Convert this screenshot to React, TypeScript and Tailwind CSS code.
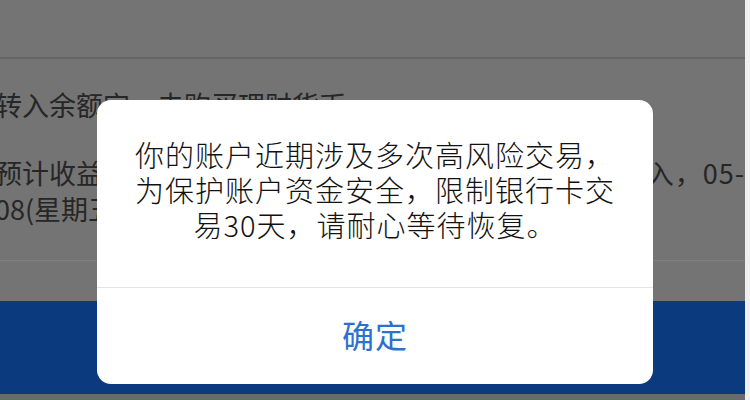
const cjk = "font-['Noto_Sans_CJK_SC','Noto_Sans',sans-serif]";

function AlertDialog() {
  return (
    <div className="absolute left-[97px] top-[100px] w-[556px] h-[284px] bg-white rounded-[14px] flex flex-col overflow-hidden">
      <div className="flex-1 flex items-start justify-center pt-[37px] border-b border-[#e4e4e4]">
        <p className="text-center text-[29px] leading-[35px] text-[#111111] font-light tracking-[1px]">
          你的账户近期涉及多次高风险交易，
          <br />
          为保护账户资金安全，限制银行卡交
          <br />
          易30天，请耐心等待恢复。
        </p>
      </div>
      <button className="h-[96px] w-full flex items-center justify-center pb-[4px] text-[32px] text-[#2f6fcf] tracking-[1px]">
        确定
      </button>
    </div>
  );
}

export default function App() {
  return (
    <div className={`relative w-[750px] h-[400px] overflow-hidden flex bg-[#747474] ${cjk}`}>
      <div className="w-[745px] flex flex-col">
        {/* header area */}
        <div className="h-[59px] border-b-2 border-[#656565]" />

        {/* detail rows */}
        <div className="h-[202px] border-b border-[#7e7e7e] flex flex-col text-[27px] leading-[36px] text-[#262626] whitespace-nowrap overflow-hidden">
          <div className="pt-[28px] -ml-[5px]">转入余额宝，去购买理财货币</div>
          <div className="mt-[32px] -ml-[5px] flex justify-between">
            <span>预计收益将于</span>
            <span className="tracking-[1px]">入，05-</span>
          </div>
          <div className="-ml-[5px]">08(星期五)</div>
        </div>

        <div className="h-[40px]" />

        {/* bottom action bar */}
        <div className="h-[93px] bg-[#0c3a7f]" />
        <div className="flex-1 bg-[#6a6a6a]" />
      </div>
      <div className="w-[5px] bg-[#f0f0f0]" />

      <AlertDialog />
    </div>
  );
}
